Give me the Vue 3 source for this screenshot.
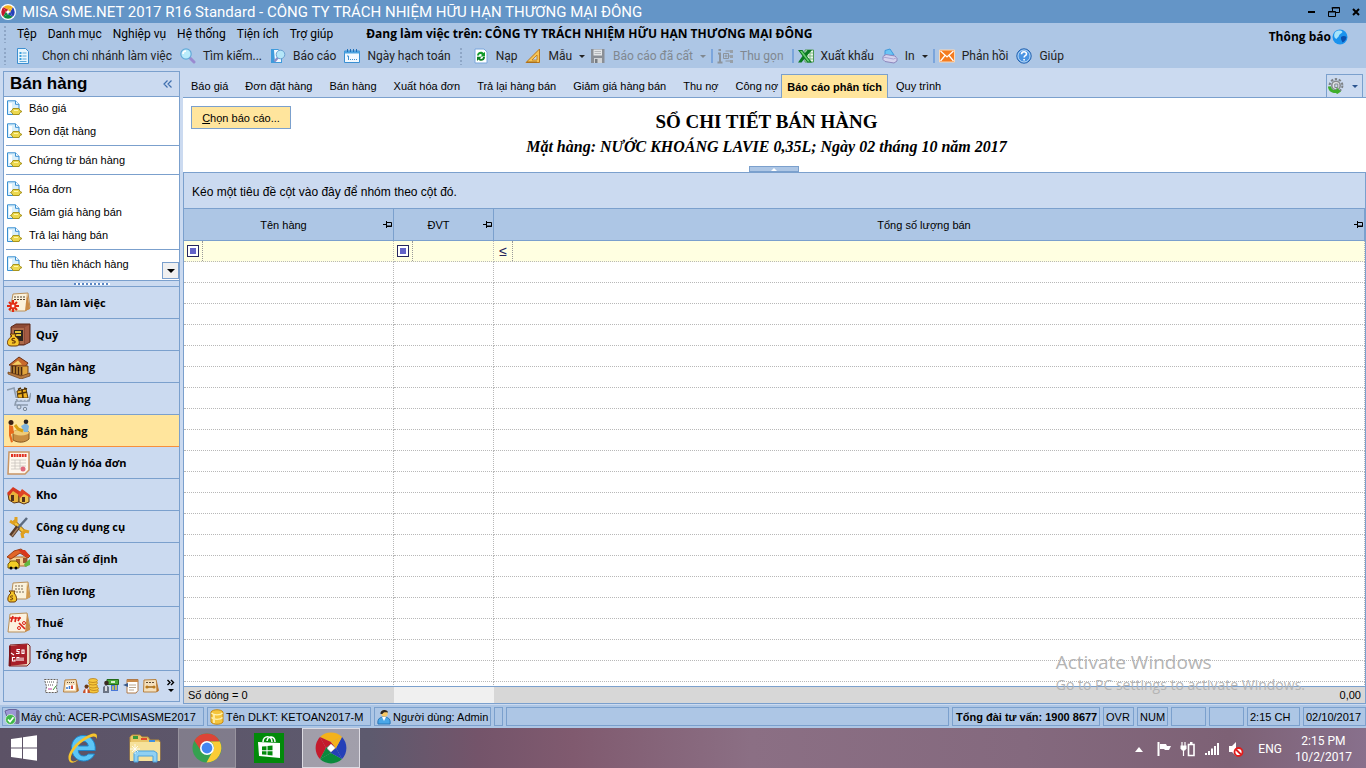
<script setup>
const menus = ['Tệp', 'Danh mục', 'Nghiệp vụ', 'Hệ thống', 'Tiện ích', 'Trợ giúp']
const toolsLeft = [
  { icon: 'branch', label: 'Chọn chi nhánh làm việc', wide: true },
  { icon: 'search', label: 'Tìm kiếm...' },
  { icon: 'report', label: 'Báo cáo' },
  { icon: 'calendar', label: 'Ngày hạch toán' },
]
const toolsRight = [
  { icon: 'reload', label: 'Nạp' },
  { icon: 'ruler', label: 'Mẫu', arrow: true },
  { icon: 'floppy', label: 'Báo cáo đã cất', arrow: true, off: true, sep: true },
  { icon: 'tree', label: 'Thu gọn', off: true, sep: true },
  { icon: 'excel', label: 'Xuất khẩu' },
  { icon: 'printer', label: 'In', arrow: true, sep: true },
  { icon: 'mail', label: 'Phản hồi' },
  { icon: 'help', label: 'Giúp' },
]
const taskGroups = [
  ['Báo giá', 'Đơn đặt hàng'],
  ['Chứng từ bán hàng'],
  ['Hóa đơn', 'Giảm giá hàng bán', 'Trả lại hàng bán'],
  ['Thu tiền khách hàng'],
]
const modules = [
  { icon: 'desk', label: 'Bàn làm việc' },
  { icon: 'safe', label: 'Quỹ' },
  { icon: 'bank', label: 'Ngân hàng' },
  { icon: 'cart', label: 'Mua hàng' },
  { icon: 'sale', label: 'Bán hàng', on: true },
  { icon: 'invoice', label: 'Quản lý hóa đơn' },
  { icon: 'stock', label: 'Kho' },
  { icon: 'tools', label: 'Công cụ dụng cụ' },
  { icon: 'asset', label: 'Tài sản cố định' },
  { icon: 'salary', label: 'Tiền lương' },
  { icon: 'tax', label: 'Thuế' },
  { icon: 'ledger', label: 'Tổng hợp' },
]
const minis = ['m-contract', 'm-chart', 'm-coins', 'm-people', 'm-scroll', 'm-card']
const tabs = ['Báo giá', 'Đơn đặt hàng', 'Bán hàng', 'Xuất hóa đơn', 'Trả lại hàng bán', 'Giảm giá hàng bán', 'Thu nợ', 'Công nợ', 'Báo cáo phân tích', 'Quy trình']
const activeTab = 'Báo cáo phân tích'
const columns = ['Tên hàng', 'ĐVT', 'Tổng số lượng bán']
const emptyRows = 21
</script>

<template>
  <div class="desktop">
    <svg class="defs" aria-hidden="true">
      <symbol id="logo" viewBox="0 0 32 32">
        <path d="M5 5A16 16 0 0 1 27 5L16 10z" fill="#f4b21b" />
        <path d="M27 5A16 16 0 0 1 27 27L21 16z" fill="#2440b8" />
        <path d="M27 27A16 16 0 0 1 5 27L16 21z" fill="#0a8a3c" />
        <path d="M5 27A16 16 0 0 1 5 5L11 16z" fill="#c41a2c" />
        <path d="M5 5L16 10L20 15L16 12L11 16z" fill="#c41a2c" />
        <path d="M27 5L21 16L16 20L20 15L16 10z" fill="#f4b21b" />
        <path d="M27 27L16 21L12 17L16 20L21 16z" fill="#2440b8" />
        <path d="M5 27L11 16L16 12L12 17L16 21z" fill="#0a8a3c" />
        <path d="M16 12L20 16L16 20L12 16z" fill="#fff" />
      </symbol>
      <symbol id="branch" viewBox="0 0 16 16">
        <path d="M2.500.5h8l3 3v12h-11z" fill="#e8f5fc" stroke="#3d8fd0" />
        <path d="M4.500 4h2v2h-2zM4.500 7h2v2h-2zM4.500 10h2v2h-2z" fill="#3aa0dc" />
        <path d="M7.500 5h4M7.500 8h4M7.500 11h4M4.500 13.500h7" stroke="#5aa8dc" />
      </symbol>
      <symbol id="search" viewBox="0 0 16 16">
        <path d="M10 10l4 4" stroke="#9a8ad0" stroke-width="3" stroke-linecap="round" />
        <circle cx="6" cy="6" r="5.200" fill="#b9ecfb" stroke="#62a9d8" stroke-width="1.200" />
        <path d="M3 6a3 3 0 0 1 3-3" fill="none" stroke="#fff" stroke-width="1.500" />
      </symbol>
      <symbol id="report" viewBox="0 0 16 16">
        <path d="M1 1h7l4 3v11H1z" fill="#3f9bdc" />
        <path d="M4 2h4l3 3v9H5z" fill="#f4faff" />
        <path d="M8 9.500l-3.500 4" stroke="#8d8fc8" stroke-width="2.400" />
        <circle cx="10.500" cy="6.500" r="4.300" fill="#b5e6f8" stroke="#6a9fd0" />
      </symbol>
      <symbol id="calendar" viewBox="0 0 16 16">
        <path d="M.5 3h15v11.500H.5z" fill="#f2f9ff" stroke="#3a8fd2" />
        <path d="M.5 3h15v2.500H.5z" fill="#4aa2e0" />
        <path d="M3.500 1v3M6.500 1v3M9.500 1v3M12.500 1v3" stroke="#1f70b8" />
        <path d="M3 8h1.500v4M6 11.500h1M8 11.500h1M10 11.500h1M12 11.500h1" fill="none" stroke="#3d8fd0" />
      </symbol>
      <symbol id="reload" viewBox="0 0 16 16">
        <path d="M2 1h9l3 3v11H2z" fill="#fff" stroke="#7aa7dc" />
        <path d="M4 7.500c0-4 5-5 6.500-2.500L12 4v4.500H7.500L9 7C8 5.500 6 6 6 7.500z" fill="#129a2b" />
        <path d="M12 9c0 4-5 5-6.500 2.500L4 13V8.800h4.500L7 10.300c1 1.200 3 .8 3-1.300z" fill="#0b7e20" />
      </symbol>
      <symbol id="ruler" viewBox="0 0 16 16">
        <path d="M1 14.500h13.500V1z" fill="#f7c455" stroke="#b9771c" />
        <path d="M7 12h5V7z" fill="#c2d6ec" stroke="#b9771c" stroke-width=".8" />
        <path d="M3 13v1.500M5 13v1.500M7 13v1.500M9 13v1.500M11 13v1.500" stroke="#7a4a08" stroke-width=".7" />
      </symbol>
      <symbol id="floppy" viewBox="0 0 16 16">
        <path d="M1 1h13.500v14H1z" fill="#8a8f96" />
        <path d="M3.500 1.500h8.500v6H3.500z" fill="#e4e6e8" />
        <path d="M4 10h8v5H4z" fill="#d0d3d6" />
        <path d="M5 11h2.500v4H5z" fill="#777c82" />
        <path d="M4.500 3.500h6.500M4.500 5.500h6.500" stroke="#b5b8bb" />
      </symbol>
      <symbol id="tree" viewBox="0 0 16 16">
        <path d="M1 5.500h2v8.500M.5 14.500h5M1.500 2h2.500" fill="none" stroke="#8d949c" stroke-width="2" />
        <path d="M6.500 5.500h5v5h-5zM9 6.500v3M7.500 8h3M11.500 8h2M8.500 3h5M8.500 13h5" fill="none" stroke="#8d949c" />
        <path d="M13 2h3v3h-3zM13 7h3v3h-3zM13 12h3v3h-3z" fill="#98a0a8" />
      </symbol>
      <symbol id="excel" viewBox="0 0 16 16">
        <path d="M7 2h8.500v12H7z" fill="#eef8ee" stroke="#4f9a55" />
        <path d="M9 5h6M9 8h6M9 11h6M12 2v12" stroke="#7fb884" />
        <path d="M0 2h4.500l2.300 3.200L9.500 2H14L8.800 8l5.200 6.500H9.300l-2.800-3.800-3 3.800H0L4.500 8z" fill="#0b7a22" />
        <path d="M2 3h2l7.800 10.500H9.900z" fill="#6ad070" />
      </symbol>
      <symbol id="printer" viewBox="0 0 16 16">
        <path d="M3 8V2.500L8 1l4 6z" fill="#6bc4f4" stroke="#3f98dc" />
        <path d="M1 8.500l3-2 9 1.500 2 2v3l-3 2-9-1.500-2-2z" fill="#d5d3ee" stroke="#8d87bd" />
        <path d="M1 9l10.500 2 3.500-1.500" fill="none" stroke="#a9a4d2" />
      </symbol>
      <symbol id="mail" viewBox="0 0 16 16">
        <path d="M.5 2h15v12H.5z" fill="#f47b20" stroke="#fbd8b4" />
        <path d="M1.500 3l6.500 6 6.500-6M1.500 13l4.500-5.500M14.500 13L10 7.500" fill="none" stroke="#fff" stroke-width="1.200" />
      </symbol>
      <symbol id="help" viewBox="0 0 16 16">
        <circle cx="8" cy="8" r="7.200" fill="#4a94e2" stroke="#2562ad" />
        <circle cx="8" cy="8" r="6" fill="none" stroke="#b9d8f6" />
        <path d="M5.500 6.300c0-3.500 5.200-3.300 5-.3 0 1.700-2.400 1.700-2.400 3.500M8.100 11v1.500" fill="none" stroke="#fff" stroke-width="1.600" />
      </symbol>
      <symbol id="globe" viewBox="0 0 16 16">
        <circle cx="8" cy="8" r="7.500" fill="#1b93ee" />
        <path d="M3 3.500C5 1 9 1 10.500 3c-1 2-3 1.500-3.500 3.500S5 8.500 4.500 10C2 9 1.500 6 3 3.500z" fill="#a6e4fb" />
        <path d="M9 8c2-1.500 4-1 5.500 0-.3 3-2 4.800-4 5.500-.5-2-2-3-1.500-5.500z" fill="#0b4fae" />
      </symbol>
      <symbol id="gear" viewBox="0 0 16 16">
        <circle cx="8" cy="7.500" r="6.400" fill="none" stroke="#7d8287" stroke-width="2" stroke-dasharray="2.400 1.620" />
        <circle cx="8" cy="7.500" r="4.200" fill="#e4e6e8" stroke="#878c90" stroke-width="1.600" />
        <path d="M6.800 6h3v3.500h-3z" fill="#cbdaf0" stroke="#80858a" />
        <path d="M0 8.500h3c.5 3 3 4 5.500 3.500V9.500l4.500 4-4.500 3V15C3.500 15.500 0 12.500 0 8.500z" fill="#3fae2a" />
      </symbol>
      <symbol id="page" viewBox="0 0 16 16">
        <path d="M.5.8h8l3.500 3.500v10.200H.5z" fill="#d9effb" stroke="#3a8fd2" />
        <path d="M8.500 .8v3.500H12" fill="#fff" stroke="#3a8fd2" />
        <path d="M2 3h3v8H2z" fill="#fff" />
        <path d="M3.500 11.500l1.500-1 1-2h6l1 2 2 1-2 1-1 2H6l-1-2z" fill="#ecd84e" stroke="#a8941c" />
        <path d="M7 10.500h4" stroke="#fff6a8" />
      </symbol>
      <symbol id="desk" viewBox="0 0 24 24">
        <path d="M6 3l15-1 2 15-5 3H3z" fill="#fbf2dc" stroke="#b98f58" />
        <path d="M20 2l3 16-5 2z" fill="#c98a46" />
        <path d="M7 6h11M7 8.500h11" stroke="#554432" stroke-dasharray="2 1" />
        <path d="M6 9v12M0 15h12M2 11l8 8M10 11l-8 8" stroke="#e22b12" stroke-width="2.200" />
        <circle cx="6" cy="15" r="2" fill="#fff" stroke="#e22b12" />
      </symbol>
      <symbol id="safe" viewBox="0 0 24 24">
        <path d="M4 4l5-3h14v18l-6 3H4z" fill="#8d4a35" stroke="#5c2818" />
        <path d="M5 5h12v16H5z" fill="#ad6a4a" />
        <path d="M7 7h9v11H7z" fill="#2d2620" />
        <path d="M8 9h6M9 12h5" stroke="#e4c33a" stroke-width="2" />
        <path d="M18 4l4-2v17l-4 2z" fill="#a35a42" />
        <path d="M3 11l2 2c-6 4-6 10-1 10h5c5 0 4-7-1-10l1-2z" fill="#f6c52a" stroke="#6e3b06" />
        <path d="M8 15.500c-4-.5-4 2-1 2.300 2.500.7 1 2.700-2 2" fill="none" stroke="#6e3b06" stroke-width="1.200" />
      </symbol>
      <symbol id="bank" viewBox="0 0 24 24">
        <path d="M2 10L12 2l9 6-3 4z" fill="#c8692c" stroke="#6a3015" />
        <path d="M5 10l6-4.500 4 4z" fill="#f3cf64" />
        <path d="M4 11h17v8l-5 2-12-3z" fill="#e0a43c" stroke="#7a4516" />
        <path d="M5.500 11v7M8.500 11v8M11.500 12v8M14.500 12v8" stroke="#4a2811" stroke-width="1.700" />
        <path d="M1 17l13 4 9-3v3l-9 3-13-5z" fill="#b87b3e" stroke="#6d3d15" stroke-width=".7" />
      </symbol>
      <symbol id="cart" viewBox="0 0 24 24">
        <path d="M0 3l7-2 3 13h12l2-8M9 14l-1 4h13" fill="none" stroke="#8d9cae" stroke-width="1.600" />
        <path d="M10 4l9-2 2 9H11z" fill="#f3b520" stroke="#5a3a0a" />
        <path d="M15 2l1 9M11 7l9-2M11 2.500l3-1.500M17 1l3 1" stroke="#513205" stroke-width="1.700" />
        <path d="M8 11.500h14M12 11v3M16 11v3M20 11l-1 3" stroke="#dfe6ee" />
        <circle cx="12" cy="20" r="2" fill="#d2dbe6" stroke="#77879b" />
        <circle cx="18" cy="22" r="1.700" fill="#d2dbe6" stroke="#77879b" />
      </symbol>
      <symbol id="sale" viewBox="0 0 24 24">
        <path d="M6 13c5-3 13-3 16 0v7c-4 4-11 4-16 1z" fill="#c98f42" stroke="#8a5a20" />
        <ellipse cx="14" cy="13.500" rx="8" ry="3" fill="#f0cc78" />
        <path d="M2 6l4 1 1 7-3 1 2 8-2 .5-2-7z" fill="#e86a1c" />
        <circle cx="4" cy="3.500" r="2.500" fill="#3a2012" />
        <path d="M14 7l5-3 3 3-1 6h-4z" fill="#7fb4dc" />
        <circle cx="19" cy="2.800" r="2.300" fill="#2a2420" />
        <path d="M8 6l3 4 5 2" fill="none" stroke="#d8a010" stroke-width="3" />
      </symbol>
      <symbol id="invoice" viewBox="0 0 24 24">
        <path d="M2 1h20v18l-4 4H1z" fill="#fdf7ee" stroke="#c99563" stroke-width="1.500" />
        <path d="M4 4.500h16" stroke="#e03022" stroke-width="3" stroke-dasharray="2 .7" />
        <path d="M4 9h15M4 12h15M4 15h15M4 18h9M8 9v9M13 9v9" stroke="#c8c3bd" stroke-width=".8" />
        <circle cx="16" cy="18" r="2.500" fill="#e0687c" />
      </symbol>
      <symbol id="stock" viewBox="0 0 24 24">
        <path d="M1 11l5-5 6 4v9l-5 1-5-3z" fill="#e9b23a" stroke="#5b3412" />
        <path d="M0 10l6-6 8 5-2 3-6-4-4 5z" fill="#d63820" />
        <path d="M12 12l5-4 5 5v6l-5 2-5-2z" fill="#efc24c" stroke="#5b3412" />
        <path d="M11 12l4-6 8 6 1 3-7-4-4 4z" fill="#df4526" />
        <path d="M4 12h3v6H4zM15 14h3v5h-3z" fill="#51301a" />
      </symbol>
      <symbol id="tools" viewBox="0 0 24 24">
        <path d="M6 6l12 12" stroke="#8a5c12" stroke-width="4.500" />
        <path d="M6 6l12 12" stroke="#f4c23a" stroke-width="3" />
        <path d="M3 6l3 2 3-2 0-4M22 17l-4-1-3 3 1 4" fill="none" stroke="#e0a01e" stroke-width="3" />
        <path d="M20 3L11 13" stroke="#5c6b80" stroke-width="2.500" />
        <path d="M11 12l-7 9" stroke="#553a28" stroke-width="4.500" />
        <path d="M11 13l-6 8" stroke="#a98363" stroke-width="1.400" />
      </symbol>
      <symbol id="asset" viewBox="0 0 24 24">
        <path d="M3 10h17v9H3z" fill="#f4d193" stroke="#b26c2a" />
        <path d="M0 10l7-6 7-2 9 7-2 2-8-5-9 6z" fill="#e26527" stroke="#9c3b12" />
        <path d="M11 3h7l5 6-4 1z" fill="#d8361d" />
        <path d="M9 12h4v7H9zM16 11h4v5h-4z" fill="#9c562c" />
        <path d="M1 17l3-3h5l3 3v4H1z" fill="#f3cd25" stroke="#7a5b07" />
        <circle cx="4" cy="21" r="1.500" /><circle cx="9" cy="21" r="1.500" />
        <path d="M17 17l6-5v6l-5 2z" fill="#62b840" />
      </symbol>
      <symbol id="salary" viewBox="0 0 24 24">
        <path d="M6 4l15-1 2 15-4 2H4z" fill="#fbf2dc" stroke="#b98f58" />
        <path d="M20 3l3 15-4 2z" fill="#d39b4e" />
        <path d="M8 7h9M8 10h9M9 13h8" stroke="#7c6a55" stroke-dasharray="2 1" />
        <path d="M2 12l2 2c-4 3-4 9-1 9h4c4 0 3-6 0-9l1-2z" fill="#f6c52a" stroke="#6e3b06" />
        <path d="M6 17c-4-.5-3 2-.5 2 1 2-2 2-2.500 1.500" fill="none" stroke="#6e3b06" />
      </symbol>
      <symbol id="tax" viewBox="0 0 24 24">
        <path d="M3 3l17-1 3 15-5 4H1z" fill="#fcf1df" stroke="#b98f58" />
        <path d="M20 2l3 17-5 2z" fill="#c98a46" />
        <path d="M3 7h11M6 5l-2 6M9 6l-1 5M13 6l-2 4M12 12l6 6" stroke="#dd2318" stroke-width="1.700" />
        <circle cx="12" cy="17" r="1.500" fill="none" stroke="#dd2318" /><circle cx="17" cy="12" r="1.500" fill="none" stroke="#dd2318" />
      </symbol>
      <symbol id="ledger" viewBox="0 0 24 24">
        <path d="M3 2l18-1 2 2v17l-3 3H2z" fill="#efd9c0" stroke="#7c2020" />
        <path d="M2 3l18-2v20L2 23z" fill="#a81f28" />
        <path d="M2 3h2v20H2z" fill="#7d141b" />
        <path d="M13 6.500h-3v2h2v2H9M15 10.500v-3.500h2v3.500zM8 14.500H5.500V18H8v-1.500M10 18v-3.500h2V18M14 14.500V18M16 14.500V18M4 10l3 2" fill="none" stroke="#fff" stroke-width="1.100" />
      </symbol>
      <symbol id="m-contract" viewBox="0 0 16 16">
        <path d="M1.500 1.500h13l-1 8 1 5h-12l1-6z" fill="#fff" stroke="#66605a" stroke-dasharray="2 1" />
        <path d="M4 4h8M5 7h6" stroke="#555" stroke-dasharray="1 1" />
        <path d="M5 11h4" stroke="#c33ca0" /><path d="M10 12l3-4" stroke="#3a9a3a" />
      </symbol>
      <symbol id="m-chart" viewBox="0 0 16 16">
        <path d="M2 2l11-.5 2.500 11L13 14H.5z" fill="#f4e0bd" stroke="#b7813f" />
        <path d="M13 2l2.500 11-2 1z" fill="#b9742c" />
        <path d="M4 4.500h7" stroke="#6a5238" stroke-dasharray="1 1" />
        <path d="M3 7h9v5H3z" fill="#fff" /><path d="M4 11V9M6.500 11V8" stroke="#3a7ad0" stroke-width="1.500" /><path d="M9 11V7.500" stroke="#d83a1c" stroke-width="1.800" />
      </symbol>
      <symbol id="m-coins" viewBox="0 0 16 16">
        <g fill="#f7c73c" stroke="#b9821a" stroke-width=".8">
          <ellipse cx="10.500" cy="13" rx="5" ry="2" /><ellipse cx="11" cy="10.500" rx="4.500" ry="2" /><ellipse cx="10" cy="8" rx="4.500" ry="2" /><ellipse cx="10" cy="5" rx="4.500" ry="2" /><ellipse cx="10" cy="2.500" rx="4.500" ry="2" />
        </g>
        <circle cx="3.500" cy="8.500" r="2" fill="#6b3b1c" /><path d="M0 15c0-6 7-6 7 0z" fill="#c8502a" /><path d="M2.500 11h2v4h-2z" fill="#fff" />
      </symbol>
      <symbol id="m-people" viewBox="0 0 16 16">
        <path d="M4 1.500h11.500v5H4z" fill="#4aa838" stroke="#246a1a" /><path d="M8 4h4" stroke="#d5f1c8" stroke-width="2" />
        <path d="M8 7h7v6H8z" fill="#4a78d8" /><path d="M10 8v4M13 7v5" stroke="#f0d040" stroke-width="1.400" />
        <circle cx="3.500" cy="5" r="2.300" fill="#3a2a22" /><path d="M0 15V9l3-2 3 2v6z" fill="#6b7486" /><path d="M3 8v5" stroke="#fff" stroke-width="1.500" />
      </symbol>
      <symbol id="m-scroll" viewBox="0 0 16 16">
        <path d="M4 1.500h11v11L13 15H4z" fill="#fff" stroke="#b07a48" /><path d="M4 2h11v2H4z" fill="#c98a4a" />
        <path d="M6 7h7M6 9.500h7M6 12h5" stroke="#b9a690" /><path d="M0 7l5-2v4z" fill="#3a5a8a" />
      </symbol>
      <symbol id="m-card" viewBox="0 0 16 16">
        <path d="M1 2l12-.5 2.500 11L13 14H.5z" fill="#f4e0bd" stroke="#b7813f" /><path d="M13 2l2.500 11-2 1z" fill="#b9742c" />
        <path d="M3 4.500h9" stroke="#5e4a32" stroke-dasharray="2 1" /><path d="M4 9h7" stroke="#a06a20" stroke-width="1.500" /><circle cx="4" cy="9" r="1.600" fill="#b8791c" /><circle cx="11" cy="9" r="1.600" fill="#b8791c" />
      </symbol>
      <symbol id="server" viewBox="0 0 16 16">
        <path d="M1 2l4-1.500h7L15 2v12H5z" fill="#9d98d6" stroke="#6a659c" /><path d="M12 1.500h3V15h-3z" fill="#77719c" />
        <circle cx="6.500" cy="10.500" r="5" fill="#3fb848" stroke="#d9f4dc" stroke-width=".8" /><path d="M4 10.500l2 2.200 3.500-4.500" fill="none" stroke="#fff" stroke-width="1.700" />
      </symbol>
      <symbol id="db" viewBox="0 0 16 16">
        <path d="M2 3c2-3 10-3 12 0v10c-2 3-10 3-12 0z" fill="#f5c53c" stroke="#c58a18" />
        <path d="M2.500 4c2 2.500 9 2.500 11 0M2.500 8.500c2 2.500 9 2.500 11 0" fill="none" stroke="#fff2b0" stroke-width="1.400" /><path d="M5 6v8" stroke="#ffe89a" stroke-width="2" />
      </symbol>
      <symbol id="user" viewBox="0 0 16 16">
        <path d="M2 15c-1-6 3-7 6-7s7 1 6 7z" fill="#4aa7e8" stroke="#2876b8" /><path d="M6 8l2 4 2-4z" fill="#fff" />
        <circle cx="8.500" cy="4.500" r="3.200" fill="#f7c867" /><path d="M4.500 5C4 0 12 0 12 3.500 9 3 7 3 6.500 5z" fill="#2c2622" />
      </symbol>
      <symbol id="pin" viewBox="0 0 10 8">
        <path d="M0 3.500h3M3.500 0v7M4 1.500h4.500v4H4M4 5h5" fill="none" stroke="#000" />
      </symbol>
    </svg>

    <header class="titlebar">
      <span class="orb"><svg class="i14"><use href="#logo" /></svg></span>
      <h1>MISA SME.NET 2017 R16 Standard - CÔNG TY TRÁCH NHIỆM HỮU HẠN THƯƠNG MẠI ĐÔNG</h1>
      <div class="wbtns">
        <button aria-label="Thu nhỏ"><svg class="w12" viewBox="0 0 12 12"><path d="M2 6h7" stroke="#000" stroke-width="2" /></svg></button>
        <button aria-label="Khôi phục"><svg class="w12" viewBox="0 0 12 12"><path d="M4.500 5V1.500h7v5H8M3.500 2h8M.5 5.500h7v5h-7zM.5 6h7" fill="none" stroke="#000" /></svg></button>
        <button aria-label="Đóng"><svg class="w12" viewBox="0 0 12 12"><path d="M3 3l6 6M9 3l-6 6" stroke="#000" stroke-width="2" /></svg></button>
      </div>
    </header>

    <div class="bars">
      <nav class="menubar">
        <span class="grip"></span>
        <a v-for="m in menus" :key="m" href="#">{{ m }}</a>
        <p class="working"><b>Đang làm việc trên:</b><b>CÔNG TY TRÁCH NHIỆM HỮU HẠN THƯƠNG MẠI ĐÔNG</b></p>
      </nav>
      <div class="toolbar">
        <span class="grip"></span>
        <button v-for="t in toolsLeft" :key="t.label" class="tool" :class="{ wide: t.wide }">
          <svg class="i16"><use :href="'#' + t.icon" /></svg>{{ t.label }}
        </button>
        <span class="grip mid"></span>
        <template v-for="t in toolsRight" :key="t.label">
          <button class="tool" :class="{ off: t.off, drop: t.arrow }" :disabled="t.off">
            <svg class="i16"><use :href="'#' + t.icon" /></svg>{{ t.label }}<i v-if="t.arrow" class="caret"></i>
          </button>
          <span v-if="t.sep" class="vsep"></span>
        </template>
      </div>
      <a class="notice" href="#">Thông báo<svg class="i16"><use href="#globe" /></svg></a>
    </div>

    <div class="body">
      <aside class="sidebar">
        <div class="side-head">
          <h2>Bán hàng</h2>
          <button aria-label="Thu gọn thanh bên"><svg class="chev" viewBox="0 0 10 8"><path d="M4.500.5L1 4l3.500 3.500M8.500.5L5 4l3.500 3.500" fill="none" stroke="#3f6fae" stroke-width="1.200" /></svg></button>
        </div>
        <div class="tasks">
          <ul v-for="(g, n) in taskGroups" :key="n">
            <li v-for="t in g" :key="t"><a href="#"><svg class="i16"><use href="#page" /></svg>{{ t }}</a></li>
          </ul>
          <button class="more" aria-label="Xem thêm"><i class="caret"></i></button>
        </div>
        <div class="splitter"><span></span></div>
        <nav class="modules">
          <a v-for="m in modules" :key="m.label" href="#" :class="{ on: m.on }">
            <svg class="i24"><use :href="'#' + m.icon" /></svg>{{ m.label }}
          </a>
        </nav>
        <div class="minis">
          <svg v-for="m in minis" :key="m" class="i16"><use :href="'#' + m" /></svg>
          <svg class="over" viewBox="0 0 8 14"><path d="M.5 1L3 3.500.5 6M4 1l2.500 2.500L4 6" fill="none" stroke="#000" stroke-width="1.400" /><path d="M1 10h6l-3 3z" /></svg>
        </div>
      </aside>

      <main class="main">
        <nav class="tabs">
          <a v-for="t in tabs" :key="t" href="#" :class="{ on: t === activeTab }">{{ t }}</a>
          <button class="gearbtn" aria-label="Tùy chọn"><svg class="i16"><use href="#gear" /></svg><i class="caret"></i></button>
        </nav>
        <section class="report">
          <button class="choose"><u>C</u>họn báo cáo...</button>
          <div class="heading">
            <h3>SỔ CHI TIẾT BÁN HÀNG</h3>
            <p>Mặt hàng: NƯỚC KHOÁNG LAVIE 0,35L; Ngày 02 tháng 10 năm 2017</p>
          </div>
          <button class="fold" aria-label="Thu gọn tiêu đề"><i></i></button>
        </section>
        <section class="grid">
          <p class="groupby">Kéo một tiêu đề cột vào đây để nhóm theo cột đó.</p>
          <div class="tablewrap">
            <table>
              <colgroup><col class="c1" /><col class="c2" /><col /></colgroup>
              <thead>
                <tr><th v-for="c in columns" :key="c"><span class="th"><span>{{ c }}</span><svg class="pin"><use href="#pin" /></svg></span></th></tr>
              </thead>
              <tbody>
                <tr class="filter">
                  <td v-for="(c, n) in columns" :key="c">
                    <div class="fcell">
                      <button :aria-label="'Điều kiện ' + c"><span v-if="n < 2" class="box"></span><span v-else class="le">≤</span></button>
                      <input type="text" :aria-label="'Lọc ' + c" />
                    </div>
                  </td>
                </tr>
                <tr v-for="r in emptyRows" :key="r"><td></td><td></td><td></td></tr>
              </tbody>
            </table>
          </div>
          <div class="summary"><span>Số dòng = 0</span><span></span><span>0,00</span></div>
        </section>
      </main>
      <div class="watermark"><b>Activate Windows</b><span>Go to PC settings to activate Windows.</span></div>
    </div>

    <footer class="status">
      <span class="s-server"><svg class="i16"><use href="#server" /></svg>Máy chủ: ACER-PC\MISASME2017</span>
      <span class="s-db"><svg class="i16"><use href="#db" /></svg>Tên DLKT: KETOAN2017-M</span>
      <span class="s-user"><svg class="i16"><use href="#user" /></svg>Người dùng: Admin</span>
      <span class="s-tiny"></span>
      <span class="s-fill"></span>
      <span class="s-hot">Tổng đài tư vấn: 1900 8677</span>
      <span class="s-key">OVR</span>
      <span class="s-key">NUM</span>
      <span class="s-empty"></span>
      <span class="s-empty"></span>
      <span class="s-time">2:15 CH</span>
      <span class="s-date">02/10/2017</span>
    </footer>

    <footer class="taskbar">
      <button aria-label="Start"><svg class="t28" viewBox="0 0 28 28"><path d="M1 5l11-1.600V13.500H1zM13 3.200L27 1.200v12.300H13zM1 14.500h11v10.100L1 23zM13 14.500h14v12.300l-14-2z" fill="#fff" /></svg></button>
      <button aria-label="Internet Explorer">
        <svg class="t32" viewBox="0 0 32 32">
          <path d="M16 3.500C9 3.500 4.500 9 4.500 16S9.500 29 16.500 29c5 0 9-2.500 11-7h-6.500c-1 1.500-2.500 2-4.500 2-3 0-5-2-5.300-5.500h17C29 9.500 24 3.500 16 3.500zM11.300 14c.5-3 2.300-4.800 5-4.800s4.600 1.800 4.900 4.800z" fill="#5cc6f6" stroke="#1c86cc" />
          <path d="M3 30c-6-7 7-22 19-27 7-3 9-1 7.500 4C29 3.500 25 4 20 7 10 12 2.500 23 4 28c1 2 4 2 8-1-3 3-7 5-9 3z" fill="#f6c52c" />
        </svg>
      </button>
      <button aria-label="File Explorer">
        <svg class="t32" viewBox="0 0 32 32">
          <path d="M1 28V5l2-2h8l2 2h6l2 3h9l1 2v18z" fill="#e9c568" stroke="#b98f3a" />
          <path d="M4 4h5v3H4z" fill="#3a9a3a" /><path d="M12 6h6v2h-6z" fill="#e04a2c" /><path d="M20 8h6v2h-6z" fill="#3f8fe0" />
          <path d="M1 10h30v19H1z" fill="#f6e19a" />
          <path d="M5 30V21l3-2h17l3 2v9h-4v-6H9v6z" fill="#8fd0f2" stroke="#4aa2dc" />
          <path d="M6 12v10M1 17h10M3 14l6 6M9 14l-6 6" stroke="#fff" stroke-width=".8" />
        </svg>
      </button>
      <button class="open" aria-label="Chrome">
        <svg class="t32" viewBox="0 0 32 32">
          <circle cx="16" cy="16" r="14.500" fill="#35a150" />
          <path d="M16 1.500A14.500 14.500 0 0 1 28.800 9.500H16a6.500 6.500 0 0 0-5.800 9.500L3.400 8.800A14.500 14.500 0 0 1 16 1.500z" fill="#dc4437" />
          <path d="M28.800 9.500A14.500 14.500 0 0 1 15.500 30.500L21.700 19.300a6.500 6.500 0 0 0-2.500-9.800z" fill="#fbcc35" />
          <circle cx="16" cy="16" r="7" fill="#fff" /><circle cx="16" cy="16" r="5.400" fill="#4386f0" />
        </svg>
      </button>
      <button aria-label="Store">
        <svg class="t32" viewBox="0 0 32 32">
          <path d="M1 1h30v30H1z" fill="#028a0a" /><path d="M5 10l22 1v15L6 24z" fill="#fff" />
          <path d="M10 10c0-7 9-7 9 0M14 9c1-6 8-5 8 1" fill="none" stroke="#fff" stroke-width="1.500" />
          <path d="M9 14.500l4.500-.3v4H9zM14.500 14l5-.4v4.600h-5zM9 19.200h4.500v3.600l-4.500-.4zM14.500 19.200h5V23.500l-5-.6z" fill="#028a0a" />
        </svg>
      </button>
      <button class="open active" aria-label="MISA"><svg class="t32"><use href="#logo" /></svg></button>
      <div class="tray">
        <svg class="t8" viewBox="0 0 8 5"><path d="M0 5l4-5 4 5z" fill="#fff" /></svg>
        <svg class="i16" viewBox="0 0 16 16"><path d="M2.500 1v14" stroke="#fff" stroke-width="2" /><path d="M4 3h6l1 2h4l-2 4H9L8 8H4z" fill="#fff" /></svg>
        <svg class="i16" viewBox="0 0 16 16"><path d="M8.500 3.500h5.500v11H8.500z" fill="none" stroke="#fff" stroke-width="1.600" /><path d="M10 1h2.500v2H10z" fill="#fff" /><path d="M2 1v4M5 1v4M3.500 9v6" stroke="#fff" stroke-width="1.200" /><path d="M.5 4.500h6v3l-1.500 2H2l-1.500-2z" fill="#fff" /></svg>
        <svg class="i16" viewBox="0 0 16 16"><path d="M2 12v2M5 10v4M8 7.500V14M11 5v9M14 2v12" stroke="#fff" stroke-width="2" /></svg>
        <svg class="i16" viewBox="0 0 16 16"><path d="M1 5h3l4-4v14l-4-4H1z" fill="#fff" /><circle cx="10.500" cy="11" r="4" fill="#fff" stroke="#e01c1c" stroke-width="1.800" /><path d="M8 8.500l5 5" stroke="#e01c1c" stroke-width="1.800" /></svg>
        <span class="lang">ENG</span>
        <span class="clock">2:15 PM<br />10/2/2017</span>
      </div>
    </footer>
  </div>
</template>

<style>
html, body { margin: 0; }
</style>

<style scoped>
* { box-sizing: border-box; }
.desktop {
  --line: #7ba0cd; --pale: #cbdaf0; --mid: #adc6e5; --gold: #ffe59d;
  --ui: "Open Sans", "Noto Sans", sans-serif;
  --menu: Roboto, "Open Sans", sans-serif;
  display: flex; flex-direction: column; height: 100vh; overflow: hidden;
  font: 11px "Liberation Sans", sans-serif; color: #000; background: var(--pale);
}
h1, h2, h3, p, ul { margin: 0; padding: 0; }
li { list-style: none; }
a { color: inherit; text-decoration: none; }
button { margin: 0; padding: 0; border: 0; background: none; font: inherit; color: inherit; }
svg { display: block; flex: none; }
.defs { position: absolute; width: 0; height: 0; }
.i14 { width: 14px; height: 14px; }
.i16 { width: 16px; height: 16px; }
.i24 { width: 24px; height: 24px; }
.caret { border: 3px solid transparent; border-top-color: currentColor; border-bottom: 0; }

.titlebar { flex: none; display: flex; align-items: center; height: 23px; padding: 0 4px 0 0; background: #6495c7; color: #fff; }
.orb { display: grid; place-items: center; width: 16px; height: 16px; border-radius: 50%; background: #fff; }
.titlebar h1 { margin-left: 6px; font: 15px/22px var(--menu); white-space: nowrap; }
.wbtns { display: flex; gap: 10px; margin-left: auto; }
.w12 { width: 12px; height: 12px; }

.bars { flex: none; position: relative; height: 45px; background: var(--mid); font: 12px/16px var(--menu); white-space: nowrap; }
.menubar, .toolbar { display: flex; align-items: center; height: 22px; padding-left: 3px; }
.menubar { gap: 11px; }
.grip { flex: none; width: 4px; height: 18px; background: radial-gradient(circle, #8ea6c6 1px, transparent 1px) 0 0 / 4px 4px; }
.menubar .grip { margin-right: -1px; }
.working { display: flex; gap: 3px; margin-left: 22px; font-family: var(--ui); }
.toolbar { color: #222; }
.tool { display: flex; align-items: center; gap: 7px; margin-right: 8px; }
.toolbar > .grip { margin-right: 8px; }
.toolbar > .mid { margin-right: 10px; }
.tool.wide { gap: 11px; }
.tool.off { color: #808890; }
.tool.drop { margin-right: 5px; }
.vsep { width: 2px; height: 14px; margin-right: 4px; background: #7ba5dc; }
.notice { position: absolute; right: 18px; top: 6px; display: flex; align-items: center; gap: 1px; font: 700 12px/16px var(--ui); }

.body { flex: 1; min-height: 0; position: relative; display: flex; gap: 3px; padding: 3px 0 1px 3px; }
.sidebar { flex: none; width: 177px; display: flex; flex-direction: column; margin-bottom: 2px; border: 1px solid var(--line); }
.side-head { flex: none; display: flex; align-items: center; justify-content: space-between; height: 25px; padding: 0 6px; border-bottom: 1px solid var(--line); }
.side-head h2 { font: 700 17px/24px "Liberation Sans", sans-serif; }
.chev { width: 10px; height: 8px; }
.tasks { position: relative; flex: none; padding-bottom: 4px; background: #fff; border-bottom: 1px solid var(--line); }
.tasks ul + ul { margin-top: 2px; padding-top: 3px; border-top: 1px solid var(--line); }
.tasks ul { margin-left: 2px; }
.tasks a { display: flex; align-items: center; gap: 6px; height: 23px; padding: 0 0 2px 1px; }
.more { position: absolute; right: 0; bottom: 1px; display: grid; place-items: center; width: 17px; height: 17px; border: 1px solid var(--line); background: #f0f0f0; }
.more .caret { border-width: 4px 4px 0; }
.splitter { flex: none; display: grid; place-items: center; height: 6px; border-bottom: 1px solid var(--line); }
.splitter span { width: 36px; height: 2px; background: repeating-linear-gradient(90deg, #5b87c4 0 2px, #fff 2px 4px); }
.modules { flex: none; font: 700 11px/16px var(--ui); }
.modules a { display: flex; align-items: center; gap: 5px; height: 32px; padding-left: 3px; border-bottom: 1px solid var(--line); }
.modules a.on { background: var(--gold); border-bottom-color: #f78f3c; }
.minis { flex: 1; display: flex; align-items: center; justify-content: flex-end; gap: 4px; padding-right: 4px; }
.over { width: 8px; height: 14px; margin-left: 4px; }

.main { flex: 1; min-width: 0; display: flex; flex-direction: column; }
.tabs { flex: none; display: flex; align-items: stretch; height: 27px; padding-top: 3px; border-bottom: 1px solid var(--line); white-space: nowrap; }
.tabs a { display: flex; align-items: center; padding: 0 9px 0 8px; }
.tabs a.on { padding: 0 5px; margin: 0 0 -1px -6px; border: 1px solid var(--line); border-bottom: 0; background: var(--gold); font-weight: 700; }
.gearbtn { display: flex; align-items: center; gap: 8px; width: 37px; margin-left: auto; margin-right: 3px; padding-left: 1px; border: 1px solid var(--line); border-bottom: 0; color: #2c5590; }
.report { flex: none; position: relative; height: 74px; padding: 8px; background: #fff; }
.choose { position: absolute; left: 8px; top: 8px; width: 100px; height: 23px; border: 1px solid var(--line); background: var(--gold); }
.heading { padding: 1px 16px 0 0; text-align: center; font-family: "Liberation Serif", serif; }
.heading h3 { font-size: 19px; line-height: 30px; }
.heading p { font: italic 700 16px/20px "Liberation Serif", serif; }
.fold { position: absolute; left: 50%; bottom: 0; display: grid; place-items: center; width: 50px; height: 6px; margin-left: -26px; border: 1px solid var(--line); background: var(--mid); }
.fold i { border: 3px solid transparent; border-top: 0; border-bottom-color: #fff; }

.grid { flex: 1; min-height: 0; display: flex; flex-direction: column; border: 1px solid var(--line); background: #fff; }
.groupby { flex: none; height: 35px; padding-left: 8px; line-height: 38px; background: var(--pale); font-size: 12px; }
.tablewrap { flex: 1; min-height: 0; overflow: hidden; }
table { width: 100%; table-layout: fixed; border-collapse: separate; border-spacing: 0; }
.c1 { width: 210px; }
.c2 { width: 100px; }
th { height: 33px; padding: 0; border: solid var(--line); border-width: 1px 1px 1px 0; background: var(--mid); font-weight: 400; }
.th { display: flex; align-items: center; }
.th span { flex: 1; }
.pin { width: 10px; height: 8px; }
td { height: 21px; padding: 0; border: dotted #b8b8b8; border-width: 0 1px 1px 0; }
.filter td { background: #ffffe1; }
.fcell { display: flex; height: 20px; }
.fcell button { display: grid; place-items: center; flex: none; width: 19px; border-right: 1px dotted #999; }
.box { width: 12px; height: 12px; border: 1px solid #26265e; background: #6464c8; box-shadow: inset 0 0 0 2px #fff; }
.le { font-size: 14px; color: #26265e; }
.fcell input { flex: 1; min-width: 0; padding: 0 2px; border: 0; outline: 0; background: none; font: inherit; }
.summary { flex: none; display: grid; grid-template-columns: 210px 100px 1fr; height: 17px; line-height: 16px; border-top: 1px solid var(--line); background: #d7d7d7; }
.summary span { padding: 0 4px; }
.summary span:nth-child(2) { background: #f0f0f0; }
.summary span:last-child { text-align: right; }

.watermark { position: absolute; right: 61px; bottom: 10px; display: flex; flex-direction: column; color: #b4b4b4; font: 14px/20px var(--ui); white-space: nowrap; pointer-events: none; }
.watermark b { font-weight: 400; font-size: 19px; line-height: 26px; }

.status { flex: none; display: flex; gap: 3px; height: 23px; padding: 2px 0 2px 2px; background: var(--mid); white-space: nowrap; }
.status span { flex: none; display: flex; align-items: center; gap: 1px; height: 19px; padding: 0 2px 0 1px; border: 1px solid var(--line); }
.status .s-server { width: 202px; }
.status .s-db { width: 164px; }
.status .s-user { width: 117px; }
.status .s-tiny { width: 9px; }
.status .s-fill { flex: 1; }
.status .s-hot { width: 148px; padding-left: 3px; font-weight: 700; }
.status .s-key { width: 31px; padding-left: 2px; }
.status .s-empty { width: 35px; }
.status .s-time { width: 53px; padding-left: 2px; }
.status .s-date { width: 63px; padding-left: 2px; }

.taskbar { flex: none; display: flex; align-items: stretch; height: 40px; padding-left: 1px; background: linear-gradient(90deg, #5c5266 0, #5d5a6e 27%, #74546a 35%, #805a6f 42%, #8b6f84 55%, #84697e 75%, #7d6175 90%, #88708c 100%); color: #fff; font: 12px/16px var(--menu); }
.taskbar button { display: grid; place-items: center; flex: none; width: 58px; margin-right: 4px; }
.taskbar button:first-child { width: 46px; margin-right: 7px; }
.taskbar .open { border: 1px solid #98949f; background: rgba(255, 255, 255, .22); }
.taskbar .active { border-color: #dcdae2; background: rgba(255, 255, 255, .42); }
.t28 { width: 28px; height: 28px; }
.t32 { width: 32px; height: 32px; }
.t8 { width: 8px; height: 5px; }
.tray { display: flex; align-items: center; gap: 8px; margin-left: auto; padding: 2px 14px 0 0; }
.t8 { margin-right: 5px; }
.lang { margin-left: 6px; }
.clock { margin-left: 5px; text-align: center; }
</style>
